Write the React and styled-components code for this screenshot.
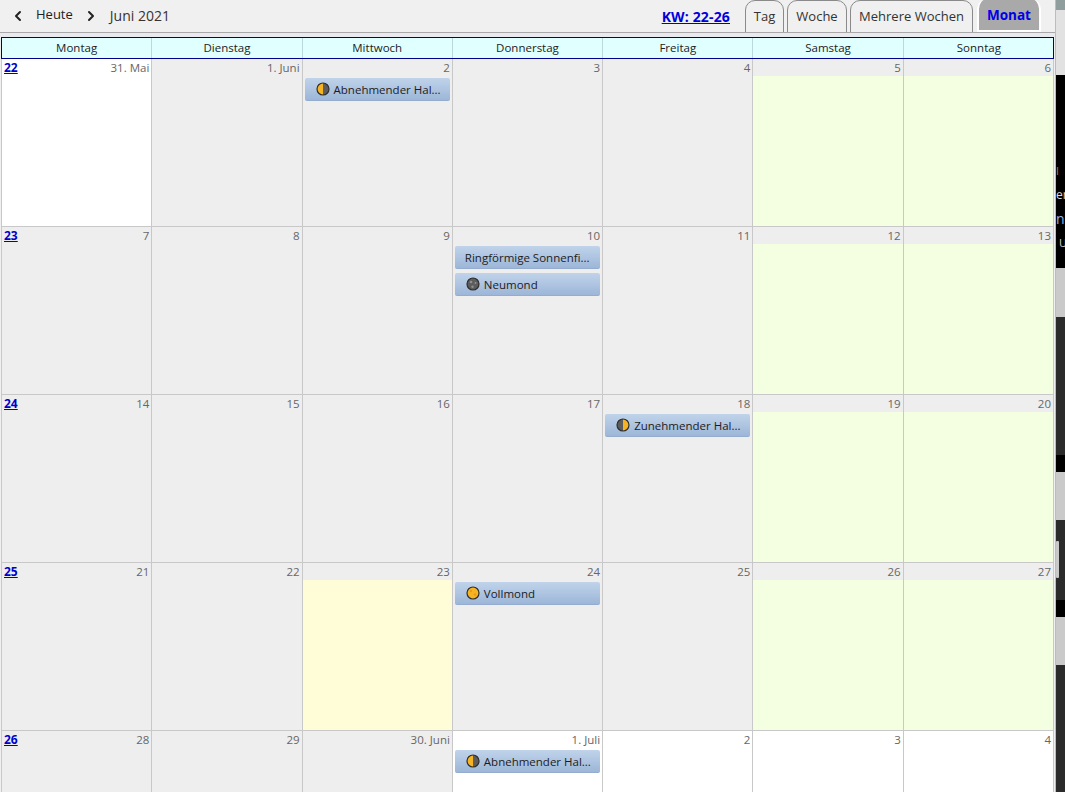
import React from "react";
import styled, { createGlobalStyle } from "styled-components";
import { ChevronLeft, ChevronRight } from "lucide-react";

const Global = createGlobalStyle`
  html, body {
    margin: 0;
    height: 100%;
    overflow: hidden;
    background: #f0f0f0;
  }
  body {
    font-family: "Open Sans", "Noto Sans", "Liberation Sans", sans-serif;
    font-size: 12px;
    color: #222;
  }
`;

const Page = styled.div`
  display: flex;
  width: 1065px;
  height: 792px;
  overflow: hidden;
`;

const Main = styled.div`
  width: 1055px;
  flex: none;
  display: flex;
  flex-direction: column;
  background: #f0f0f0;
`;

const Toolbar = styled.div`
  height: 32px;
  flex: none;
  display: flex;
  align-items: flex-end;
  overflow: hidden;
  border-bottom: 1px solid #a8a8a8;
  background: #f0f0f0;
  padding-right: 14px;
`;

const NavGroup = styled.div`
  align-self: flex-start;
  display: flex;
  align-items: center;
  height: 31px;
  padding-left: 10px;
`;

const NavButton = styled.button`
  width: 16px;
  height: 20px;
  padding: 0;
  border: 0;
  background: none;
  display: flex;
  align-items: center;
  justify-content: center;
  color: #222;
`;

const TodayLabel = styled.span`
  font-size: 13px;
  margin: -3px 10px 0 10px;
`;

const MonthLabel = styled.span`
  font-size: 14px;
  margin-left: 11px;
  color: #333;
`;

const WeekRange = styled.a`
  margin-left: auto;
  margin-right: 15px;
  align-self: center;
  font-size: 14px;
  letter-spacing: 0.15px;
  font-weight: 700;
  color: #0000dd;
  text-decoration: underline;
`;

const Tabs = styled.div`
  display: flex;
  align-items: flex-end;
  gap: 3px;
`;

const Tab = styled.div`
  height: 33px;
  margin-bottom: -1px;
  padding-bottom: 2px;
  box-sizing: border-box;
  width: ${(p) => p.$w}px;
  display: flex;
  align-items: center;
  justify-content: center;
  border-radius: 10px 10px 0 0;
  font-size: 13px;
  color: #333;
  background: #f0f0f0;
  border: 1px solid #8a8a8a;
`;

const ActiveTab = styled(Tab)`
  margin-left: 1px;
  margin-bottom: 0;
  padding-bottom: 0;
  background: #a9a9a9;
  color: #0000e6;
  font-size: 13.5px;
  font-weight: 700;
  border: 2px solid #fff;
  border-top: 0;
`;

const ToolbarGap = styled.div`
  height: 4px;
  flex: none;
  background: #e9e9ef;
`;

const DayHeader = styled.div`
  flex: none;
  margin-left: 1px;
  width: 1053px;
  height: 22px;
  box-sizing: border-box;
  display: grid;
  grid-template-columns: repeat(7, 1fr);
  border: 1px solid #00008b;
  border-right: 0;
  box-shadow: inset -1px 0 #00008b;
  background: #e0ffff;
`;

const DayName = styled.div`
  display: flex;
  align-items: center;
  justify-content: center;
  padding-bottom: 1px;
  font-size: 11.5px;
  color: #222;
  border-right: 1px solid #b9d9dc;
  &:last-child {
    border-right: 0;
  }
`;

const Grid = styled.div`
  margin-left: 1px;
  width: 1053px;
  display: grid;
  grid-template-columns: repeat(7, 1fr);
  grid-auto-rows: 168px;
  border-left: 1px solid #c8c8c8;
  box-sizing: border-box;
`;

const Cell = styled.div`
  display: flex;
  flex-direction: column;
  min-width: 0;
  box-sizing: border-box;
  border-right: 1px solid #c8c8c8;
  border-bottom: 1px solid #c8c8c8;
  background: ${(p) => (p.$tone === "white" ? "#fff" : "#eeeeee")};
`;

const CellHead = styled.div`
  height: 17px;
  flex: none;
  display: flex;
  justify-content: space-between;
  align-items: center;
  padding: 0 2px 0 2px;
`;

const WeekLink = styled.a`
  font-size: 12px;
  font-weight: 700;
  color: #0000cc;
  text-decoration: underline;
`;

const DayNumber = styled.span`
  margin-left: auto;
  font-size: 11.5px;
  color: #666;
`;

const CellBody = styled.div`
  flex: 1;
  display: flex;
  flex-direction: column;
  gap: 4px;
  padding: 2px 2px 0;
  background: ${(p) =>
    p.$tone === "weekend" ? "#f4fee0" : p.$tone === "today" ? "#fffdd7" : "transparent"};
`;

const Event = styled.div`
  height: 23px;
  box-sizing: border-box;
  display: flex;
  align-items: center;
  gap: 4px;
  padding-left: ${(p) => (p.$icon ? 11 : 10)}px;
  border-radius: 2px;
  background: linear-gradient(#c0d3ea, #9db6d8);
  border-bottom: 1px solid #94adcf;
  white-space: nowrap;
  overflow: hidden;
  font-size: 11.5px;
  color: #1c1c1c;
`;

function MoonIcon({ phase }) {
  const gold = "#f6b322";
  const dark = "#5c5c5c";
  return (
    <svg width="14" height="14" viewBox="0 0 14 14" style={{ flex: "none" }}>
      <circle cx="7" cy="7" r="6" fill={phase === "new" ? dark : gold} />
      {phase === "waning" && <path d="M7 1a6 6 0 0 1 0 12z" fill={dark} />}
      {phase === "waxing" && <path d="M7 1a6 6 0 0 0 0 12z" fill={dark} />}
      {phase === "new" && (
        <g fill="#8f8f8f">
          <circle cx="5" cy="5" r="1.3" />
          <circle cx="9.5" cy="6" r="1" />
          <circle cx="6.5" cy="9.8" r="1.2" />
        </g>
      )}
      {phase === "full" && (
        <g fill="#eb9a17">
          <circle cx="5" cy="5" r="1.2" />
          <circle cx="9" cy="8.5" r="1.3" />
        </g>
      )}
      <circle cx="7" cy="7" r="6" fill="none" stroke="#2e2e2e" strokeWidth="1.2" />
    </svg>
  );
}

const SideStrip = styled.div`
  position: relative;
  flex: 1;
  display: flex;
  flex-direction: column;
  border-left: 1px solid #bcbcbc;
  overflow: hidden;
`;

const StripBlock = styled.div`
  height: ${(p) => p.$h}px;
  flex: none;
  background: ${(p) => p.$bg};
`;

const BlackPanel = styled.div`
  height: 193px;
  flex: none;
  box-sizing: border-box;
  padding-top: 84px;
  background: #000;
  color: #d8d8d8;
  font-size: 14px;
  line-height: 24px;
  white-space: nowrap;
`;

const PanelLine = styled.div`
  color: ${(p) => p.$color || "#d8d8d8"};
  margin-left: ${(p) => p.$x || 0}px;
  font-size: ${(p) => p.$size || 14}px;
`;

const ScrollThumb = styled.div`
  position: absolute;
  left: 0;
  top: 541px;
  width: 3px;
  height: 37px;
  background: #c9c9c9;
  border-radius: 1px;
`;

const dayNames = ["Montag", "Dienstag", "Mittwoch", "Donnerstag", "Freitag", "Samstag", "Sonntag"];

const half = "Abnehmender Hal...";

const weeks = [
  {
    no: 22,
    days: [
      { label: "31. Mai", white: true },
      { label: "1. Juni" },
      { label: "2", events: [{ text: half, moon: "waning" }] },
      { label: "3" },
      { label: "4" },
      { label: "5", body: "weekend" },
      { label: "6", body: "weekend" },
    ],
  },
  {
    no: 23,
    days: [
      { label: "7" },
      { label: "8" },
      { label: "9" },
      {
        label: "10",
        events: [{ text: "Ringförmige Sonnenfi..." }, { text: "Neumond", moon: "new" }],
      },
      { label: "11" },
      { label: "12", body: "weekend" },
      { label: "13", body: "weekend" },
    ],
  },
  {
    no: 24,
    days: [
      { label: "14" },
      { label: "15" },
      { label: "16" },
      { label: "17" },
      { label: "18", events: [{ text: "Zunehmender Hal...", moon: "waxing" }] },
      { label: "19", body: "weekend" },
      { label: "20", body: "weekend" },
    ],
  },
  {
    no: 25,
    days: [
      { label: "21" },
      { label: "22" },
      { label: "23", body: "today" },
      { label: "24", events: [{ text: "Vollmond", moon: "full" }] },
      { label: "25" },
      { label: "26", body: "weekend" },
      { label: "27", body: "weekend" },
    ],
  },
  {
    no: 26,
    days: [
      { label: "28" },
      { label: "29" },
      { label: "30. Juni" },
      { label: "1. Juli", white: true, events: [{ text: half, moon: "waning" }] },
      { label: "2", white: true },
      { label: "3", white: true },
      { label: "4", white: true },
    ],
  },
];

export default function App() {
  return (
    <Page>
      <Global />
      <Main>
        <Toolbar>
          <NavGroup>
            <NavButton>
              <ChevronLeft size={22} strokeWidth={3} />
            </NavButton>
            <TodayLabel>Heute</TodayLabel>
            <NavButton>
              <ChevronRight size={22} strokeWidth={3} />
            </NavButton>
            <MonthLabel>Juni 2021</MonthLabel>
          </NavGroup>
          <WeekRange>KW: 22-26</WeekRange>
          <Tabs>
            <Tab $w={39}>Tag</Tab>
            <Tab $w={60}>Woche</Tab>
            <Tab $w={123}>Mehrere Wochen</Tab>
            <ActiveTab $w={64}>Monat</ActiveTab>
          </Tabs>
        </Toolbar>
        <ToolbarGap />
        <DayHeader>
          {dayNames.map((name) => (
            <DayName key={name}>{name}</DayName>
          ))}
        </DayHeader>
        <Grid>
          {weeks.map((week) =>
            week.days.map((day, i) => (
              <Cell key={week.no + "-" + i} $tone={day.white ? "white" : "gray"}>
                <CellHead>
                  {i === 0 && <WeekLink>{week.no}</WeekLink>}
                  <DayNumber>{day.label}</DayNumber>
                </CellHead>
                <CellBody $tone={day.body}>
                  {(day.events || []).map((ev) => (
                    <Event key={ev.text} $icon={!!ev.moon}>
                      {ev.moon && <MoonIcon phase={ev.moon} />}
                      {ev.text}
                    </Event>
                  ))}
                </CellBody>
              </Cell>
            ))
          )}
        </Grid>
      </Main>
      <SideStrip>
        <StripBlock $h={10} $bg="#8f9e9c" />
        <StripBlock $h={65} $bg="#e2e2e2" />
        <BlackPanel>
          <PanelLine $color="#b9853f" $size={11}>l</PanelLine>
          <PanelLine $size={12}>er</PanelLine>
          <PanelLine $color="#8fb4ea">n</PanelLine>
          <PanelLine $x={3} $size={11}>U</PanelLine>
        </BlackPanel>
        <StripBlock $h={49} $bg="#cacaca" />
        <StripBlock $h={138} $bg="#2b2b2b" />
        <StripBlock $h={17} $bg="#000" />
        <StripBlock $h={48} $bg="#cacaca" />
        <StripBlock $h={80} $bg="#2b2b2b" />
        <StripBlock $h={17} $bg="#000" />
        <StripBlock $h={48} $bg="#cacaca" />
        <StripBlock $h={127} $bg="#2b2b2b" />
        <ScrollThumb />
      </SideStrip>
    </Page>
  );
}
